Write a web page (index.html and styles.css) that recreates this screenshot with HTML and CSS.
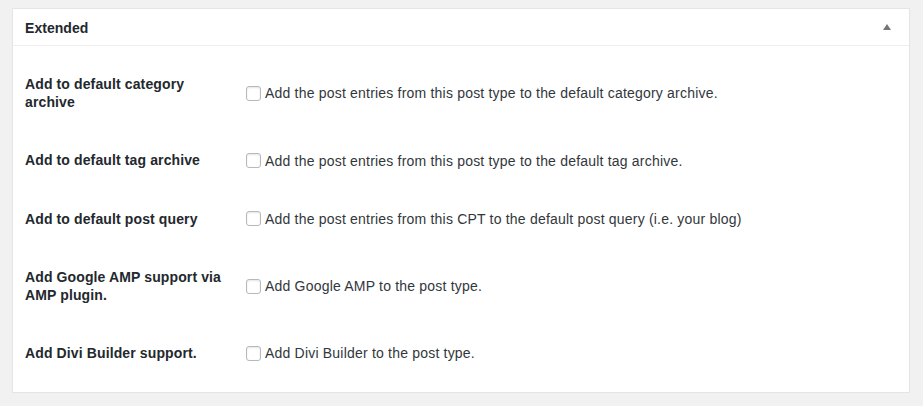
FILE: index.html
```html
<!DOCTYPE html>
<html>
<head>
<meta charset="utf-8">
<link rel="stylesheet" href="styles.css">
</head>
<body>
<div class="postbox">
  <div class="hndle">
    <h2 class="title">Extended</h2>
    <span class="toggle"></span>
  </div>
  <div class="inside">
    <table class="form-table">
      <tr>
        <th>Add to default category archive</th>
        <td><label><input type="checkbox" class="cb">Add the post entries from this post type to the default category archive.</label></td>
      </tr>
      <tr>
        <th>Add to default tag archive</th>
        <td><label><input type="checkbox" class="cb">Add the post entries from this post type to the default tag archive.</label></td>
      </tr>
      <tr>
        <th>Add to default post query</th>
        <td><label><input type="checkbox" class="cb">Add the post entries from this CPT to the default post query (i.e. your blog)</label></td>
      </tr>
      <tr>
        <th>Add Google AMP support via AMP plugin.</th>
        <td><label><input type="checkbox" class="cb">Add Google AMP to the post type.</label></td>
      </tr>
      <tr>
        <th>Add Divi Builder support.</th>
        <td><label><input type="checkbox" class="cb">Add Divi Builder to the post type.</label></td>
      </tr>
    </table>
  </div>
</div>
</body>
</html>
```
FILE: styles.css
```css
html, body {
  margin: 0;
  padding: 0;
  background: #f1f1f1;
}
body {
  padding: 8px 13px 0 12px;
  font-family: "Liberation Sans", Arial, sans-serif;
  font-size: 13px;
  color: #444;
}
.postbox {
  background: #fff;
  border: 1px solid #e5e5e5;
  box-shadow: 0 1px 1px rgba(0,0,0,.04);
}
.hndle {
  display: flex;
  align-items: center;
  justify-content: space-between;
  height: 36px;
  border-bottom: 1px solid #eee;
  padding: 0 12px;
}
.title {
  margin: 1px 0 0;
  font-size: 14px;
  font-weight: bold;
  color: #23282d;
  line-height: 20px;
  letter-spacing: 0.05px;
}
.toggle {
  width: 0;
  height: 0;
  border-left: 4px solid transparent;
  border-right: 4px solid transparent;
  border-bottom: 6px solid #72777c;
  margin-right: 6px;
}
.inside {
  padding: 9px 12px 10px;
}
.form-table {
  border-collapse: collapse;
  width: 100%;
}
.form-table th {
  width: 200px;
  padding: 20px 10px 20px 0;
  text-align: left;
  vertical-align: middle;
  font-size: 14px;
  font-weight: bold;
  line-height: 18.2px;
  color: #23282d;
  letter-spacing: 0.12px;
}
.form-table td {
  padding: 15px 10px;
  vertical-align: middle;
  font-size: 14px;
  line-height: 18px;
  color: #32373c;
  letter-spacing: 0.2px;
}
.form-table label {
  display: flex;
  align-items: center;
}
.cb {
  -webkit-appearance: none;
  appearance: none;
  width: 15px;
  height: 15px;
  margin: 0 4px 0 1px;
  border: 1px solid #b4b9be;
  border-radius: 3px;
  background: #fff;
  box-shadow: inset 0 1px 2px rgba(0,0,0,.1);
  flex: none;
}
```
